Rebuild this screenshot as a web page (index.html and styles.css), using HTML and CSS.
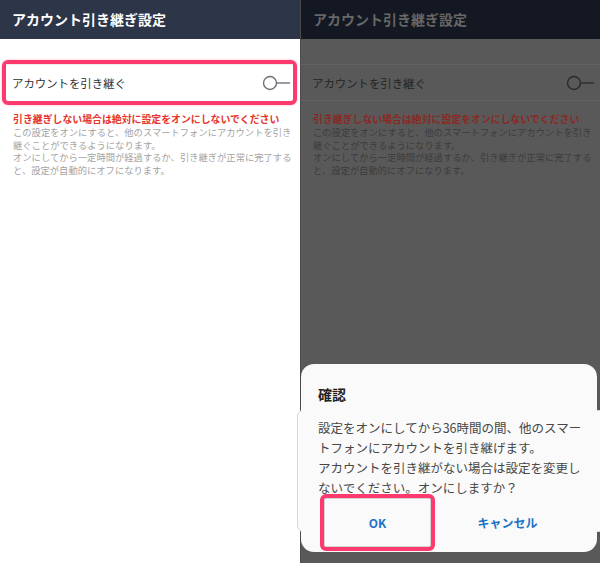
FILE: index.html
```html
<!DOCTYPE html>
<html lang="ja">
<head>
  <meta charset="UTF-8">
  <meta name="viewport" content="width=device-width, initial-scale=1.0">
  <title>アカウント引き継ぎ設定</title>
  <link rel="stylesheet" href="styles.css">
</head>
<body>
  <div class="stage">
    <!-- before: setting screen with the row highlighted -->
    <section class="screen">
      <header class="app-bar">アカウント引き継ぎ設定</header>
      <div class="row-wrap highlight">
        <div class="row">
          <span class="row-label">アカウントを引き継ぐ</span>
          <svg class="toggle" width="30" height="16" viewBox="0 0 30 16">
            <circle cx="8" cy="8" r="6.5" fill="none" stroke="currentColor" stroke-width="1.4"/>
            <line x1="14.5" y1="8" x2="28" y2="8" stroke="currentColor" stroke-width="1.4"/>
          </svg>
        </div>
      </div>
      <div class="notes">
        <p class="warning">引き継ぎしない場合は絶対に設定をオンにしないでください</p>
        <p class="hint">この設定をオンにすると、他のスマートフォンにアカウントを引き<br>継ぐことができるようになります。<br>オンにしてから一定時間が経過するか、引き継ぎが正常に完了する<br>と、設定が自動的にオフになります。</p>
      </div>
    </section>

    <!-- after: confirmation dialog over the dimmed screen -->
    <section class="screen dimmed">
      <header class="app-bar">アカウント引き継ぎ設定</header>
      <div class="row-wrap">
        <div class="row">
          <span class="row-label">アカウントを引き継ぐ</span>
          <svg class="toggle" width="30" height="16" viewBox="0 0 30 16">
            <circle cx="8" cy="8" r="6.5" fill="none" stroke="currentColor" stroke-width="1.4"/>
            <line x1="14.5" y1="8" x2="28" y2="8" stroke="currentColor" stroke-width="1.4"/>
          </svg>
        </div>
      </div>
      <div class="notes">
        <p class="warning">引き継ぎしない場合は絶対に設定をオンにしないでください</p>
        <p class="hint">この設定をオンにすると、他のスマートフォンにアカウントを引き<br>継ぐことができるようになります。<br>オンにしてから一定時間が経過するか、引き継ぎが正常に完了する<br>と、設定が自動的にオフになります。</p>
      </div>

      <div class="dialog">
        <h2 class="dialog-title">確認</h2>
        <p class="dialog-body">設定をオンにしてから36時間の間、他のスマー<br>トフォンにアカウントを引き継げます。<br>アカウントを引き継がない場合は設定を変更し<br>ないでください。オンにしますか？</p>
        <div class="dialog-actions">
          <button class="dialog-btn highlight">OK</button>
          <button class="dialog-btn">キャンセル</button>
        </div>
      </div>
    </section>

    <div class="ghost-card"></div>
  </div>
</body>
</html>
```

FILE: styles.css
```css
body {
  margin: 0;
  font-family: "Noto Sans CJK JP", "Noto Sans", sans-serif;
  background-color: #ffffff;
}
p, h2 {
  margin: 0;
}
.stage {
  position: relative;
  display: flex;
  width: 600px;
  height: 563px;
  overflow: hidden;
}
.screen {
  position: relative;
  width: 300px;
  height: 563px;
  background-color: #ffffff;
}
.app-bar {
  height: 39px;
  line-height: 39px;
  padding-left: 12px;
  background-color: #2d3548;
  color: #ffffff;
  font-size: 14px;
  font-weight: bold;
}
.row-wrap {
  margin: 21px 3px 0 2px;
  border: 4px solid transparent;
  border-radius: 6px;
}
.row-wrap.highlight {
  border-color: #fd3a6d;
  box-shadow: 0 0 2px rgba(253, 58, 109, 0.5);
}
.row {
  display: flex;
  align-items: center;
  justify-content: space-between;
  height: 36px;
  padding: 0 1px 0 6px;
  border-top: 1px solid #ececec;
  color: #333333;
}
.row-label {
  font-size: 11.4px;
}
.toggle {
  color: #6d717b;
}
.notes {
  padding: 7px 0 0 13px;
}
.warning {
  font-size: 9.9px;
  font-weight: bold;
  line-height: 14px;
  color: #e5352d;
  white-space: nowrap;
}
.hint {
  font-size: 9.3px;
  line-height: 12.6px;
  color: #a3a3a3;
  white-space: nowrap;
}

/* dimmed copy behind the dialog */
.dimmed {
  background-color: #595959;
  border-left: 1px solid #4b4b4b;
  width: 299px;
}
.dimmed .app-bar {
  background-color: #131822;
  color: #676767;
}
.dimmed .row-wrap {
  margin: 21px 0 0;
  border-left: 0;
  border-right: 0;
}
.dimmed .row {
  padding: 0 4px 0 11px;
  border-top-color: #626262;
  border-bottom: 1px solid #626262;
  height: 35px;
  color: #242424;
}
.dimmed .toggle {
  color: #2b2b2b;
}
.dimmed .warning {
  color: #8c2823;
}
.dimmed .hint {
  color: #3c3c3c;
}
.dimmed .notes {
  padding-left: 12px;
}

.dialog {
  position: absolute;
  top: 364px;
  left: 0;
  z-index: 2;
  width: 296px;
  height: 188px;
  box-sizing: border-box;
  padding: 20px 0 0 17px;
  background-color: #fafafa;
  border-radius: 13px;
}
.dialog-title {
  font-size: 14px;
  font-weight: bold;
  line-height: 20px;
  color: #222222;
}
.dialog-body {
  margin-top: 14px;
  font-size: 12.5px;
  line-height: 20px;
  color: #474747;
  white-space: nowrap;
}
.dialog-actions {
  display: flex;
  gap: 15px;
  margin: -4px 0 0 2px;
}
.dialog-btn {
  width: 115px;
  height: 57px;
  padding: 0;
  border: 4px solid transparent;
  border-radius: 6px;
  background: none;
  font-family: inherit;
  font-size: 12px;
  font-weight: bold;
  color: #1b72c6;
}
.dialog-btn.highlight {
  border-color: #fd3a6d;
  box-shadow: inset 0 0 0 1px #d4d4d4;
}
.ghost-card {
  position: absolute;
  top: 410px;
  left: 297px;
  z-index: 1;
  width: 310px;
  height: 120px;
  background-color: #fbfbfb;
  border: 1px solid #d6d6d6;
  border-radius: 6px;
}
```
